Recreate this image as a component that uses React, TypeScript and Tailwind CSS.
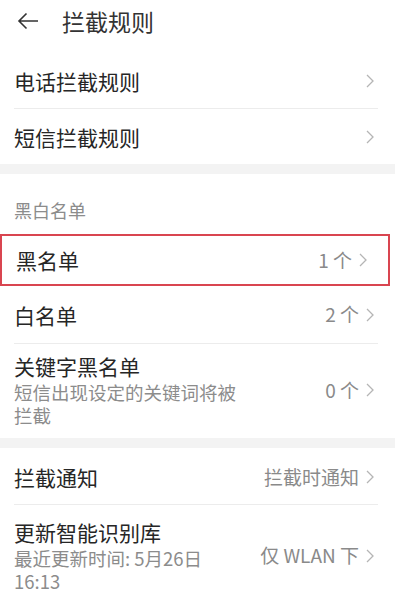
import React from "react";

const font = { fontFamily: '"Noto Sans CJK SC", "Noto Sans", sans-serif' };

function Chevron() {
	return (
		<svg width="8" height="14" viewBox="0 0 8 14" className="shrink-0 ml-[7px]">
			<path d="M1 1l6 6-6 6" fill="none" stroke="#b5b5b5" strokeWidth="1.3" />
		</svg>
	);
}

type RowProps = {
	title: string;
	value?: string;
	sub?: React.ReactNode;
	className?: string;
};

function Row({ title, value, sub, className = "" }: RowProps) {
	return (
		<div className={`flex items-center justify-between pl-[14px] pr-[21px] ${className}`}>
			<div className="flex flex-col">
				<span className="text-[21px] leading-[26px] text-[#262626]">{title}</span>
				{sub && (
					<span className="text-[18.5px] leading-[23px] text-[#8c8c8c] w-[228px] mt-[2px]">{sub}</span>
				)}
			</div>
			<div className="flex items-center text-[19px] text-[#8a8a8a]">
				{value && <span>{value}</span>}
				<Chevron />
			</div>
		</div>
	);
}

function Divider() {
	return <div className="h-px bg-[#ececec] ml-[14px] mr-[17px]" />;
}

function Band() {
	return <div className="h-[10px] bg-[#f3f3f3]" />;
}

export default function App() {
	return (
		<div className="w-[395px] h-[600px] bg-white overflow-hidden" style={font}>
			<div className="h-[42px] flex items-center pl-[17px]">
				<svg width="22" height="18" viewBox="0 0 22 18">
					<path d="M21 9H2M9.5 1.5L2 9l7.5 7.5" fill="none" stroke="#333" strokeWidth="1.6" />
				</svg>
				<span className="ml-[23px] text-[23px] text-[#333]">拦截规则</span>
			</div>
			<div className="h-[12px]" />
			<Row title="电话拦截规则" className="h-[54px]" />
			<Divider />
			<Row title="短信拦截规则" className="h-[55px]" />
			<Band />
			<div className="h-[60px] pl-[14px] pt-[24px] text-[18px] leading-[24px] text-[#8c8c8c]">黑白名单</div>
			<Row title="黑名单" value="1 个" className="h-[52px] border-2 border-[#d94550] mr-[5px] pl-[13px] pr-[15px]" />
			<Row title="白名单" value="2 个" className="h-[57px]" />
			<Divider />
			<Row
				title="关键字黑名单"
				value="0 个"
				sub="短信出现设定的关键词将被拦截"
				className="h-[94px] pb-[2px]"
			/>
			<Band />
			<Row title="拦截通知" value="拦截时通知" className="h-[56px] pt-[2px]" />
			<Divider />
			<Row
				title="更新智能识别库"
				value="仅 WLAN 下"
				sub={
					<>
						最近更新时间: 5月26日
						<br />
						16:13
					</>
				}
				className="h-[95px] pt-[6px]"
			/>
		</div>
	);
}
